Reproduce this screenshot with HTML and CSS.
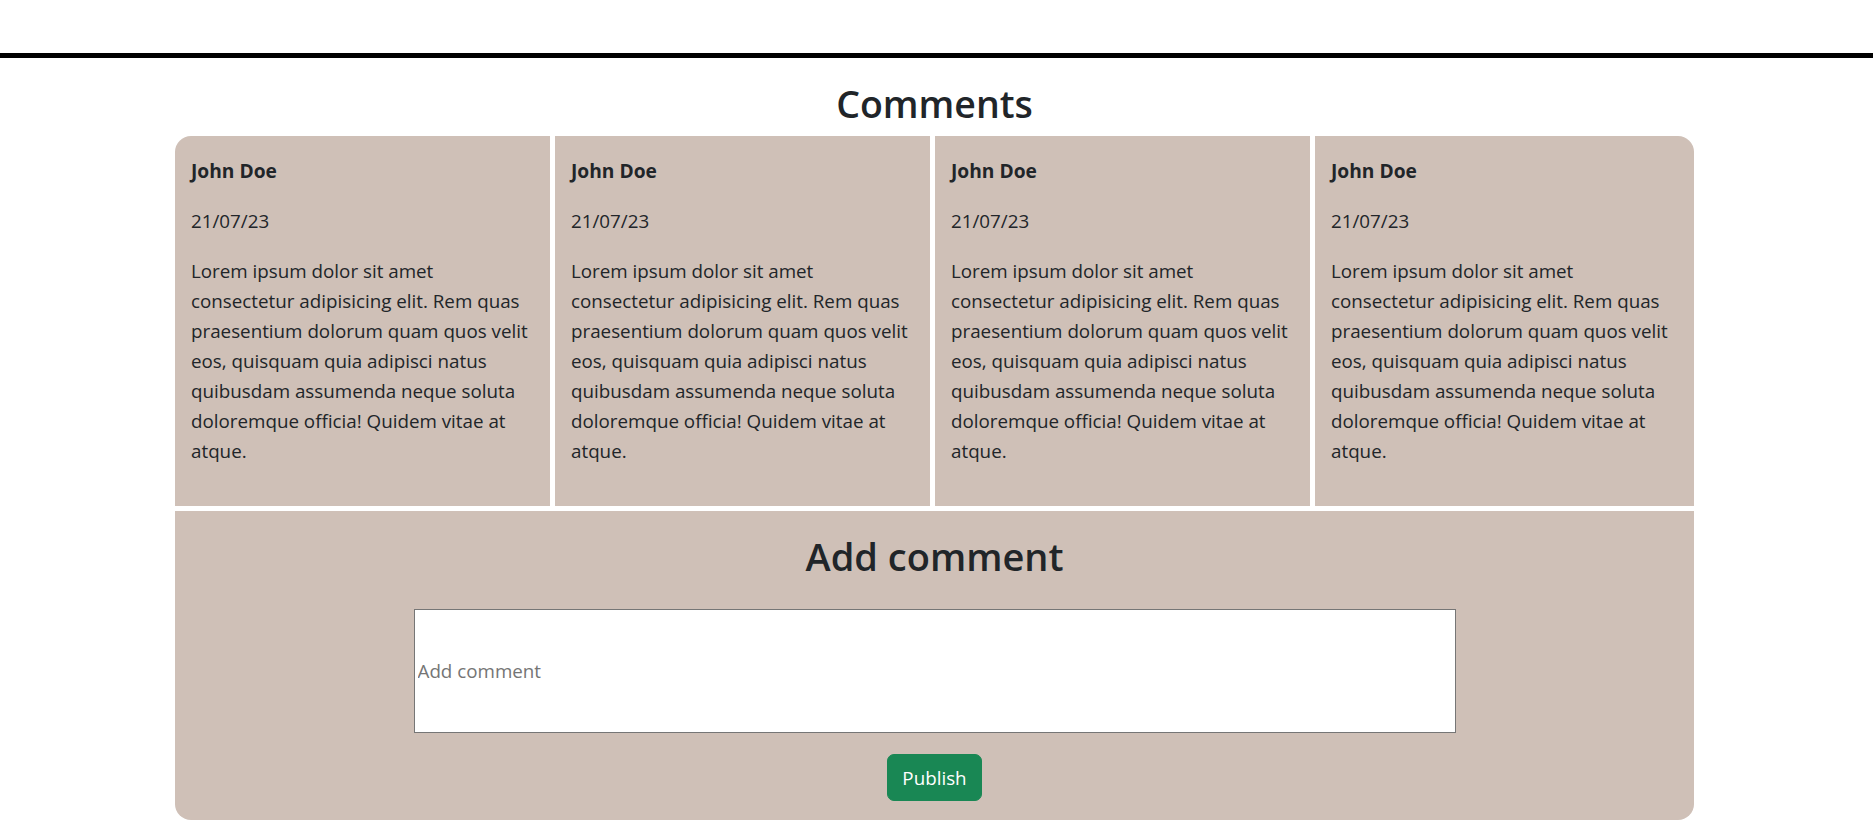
FILE: index.html
```html
<!DOCTYPE html>
<html lang="en">
<head>
<meta charset="utf-8">
<title>Comments</title>
<link rel="stylesheet" href="styles.css">
</head>
<body>
<header class="topbar"></header>
<main class="comments">
  <h2 class="section-title">Comments</h2>
  <div class="comment-grid">
    <article class="comment">
      <p class="author">John Doe</p>
      <p class="date">21/07/23</p>
      <p class="text">Lorem ipsum dolor sit amet consectetur adipisicing elit. Rem quas praesentium dolorum quam quos velit eos, quisquam quia adipisci natus quibusdam assumenda neque soluta doloremque officia! Quidem vitae at atque.</p>
    </article>
    <article class="comment">
      <p class="author">John Doe</p>
      <p class="date">21/07/23</p>
      <p class="text">Lorem ipsum dolor sit amet consectetur adipisicing elit. Rem quas praesentium dolorum quam quos velit eos, quisquam quia adipisci natus quibusdam assumenda neque soluta doloremque officia! Quidem vitae at atque.</p>
    </article>
    <article class="comment">
      <p class="author">John Doe</p>
      <p class="date">21/07/23</p>
      <p class="text">Lorem ipsum dolor sit amet consectetur adipisicing elit. Rem quas praesentium dolorum quam quos velit eos, quisquam quia adipisci natus quibusdam assumenda neque soluta doloremque officia! Quidem vitae at atque.</p>
    </article>
    <article class="comment">
      <p class="author">John Doe</p>
      <p class="date">21/07/23</p>
      <p class="text">Lorem ipsum dolor sit amet consectetur adipisicing elit. Rem quas praesentium dolorum quam quos velit eos, quisquam quia adipisci natus quibusdam assumenda neque soluta doloremque officia! Quidem vitae at atque.</p>
    </article>
  </div>
  <section class="add-comment">
    <h2 class="add-title">Add comment</h2>
    <form class="add-form">
      <input class="comment-input" type="text" placeholder="Add comment">
      <button class="publish-btn" type="button">Publish</button>
    </form>
  </section>
</main>
</body>
</html>
```

FILE: styles.css
```css
* {
  box-sizing: border-box;
}

html, body {
  margin: 0;
  padding: 0;
  background: #ffffff;
}

body {
  font-family: "Open Sans", "Noto Sans", sans-serif;
  font-size: 18.8px;
  line-height: 30px;
  color: #212529;
}

.topbar {
  height: 58px;
  border-bottom: 5px solid #000000;
}

.comments {
  width: 1519px;
  margin: 0 0 0 175px;
  padding-bottom: 10px;
}

.section-title {
  margin: 22px 0 8px;
  font-size: 37.5px;
  line-height: 48px;
  font-weight: 600;
  text-align: center;
  color: #212529;
}

.comment-grid {
  display: grid;
  grid-template-columns: 375px 375px 375px 1fr;
  gap: 5px;
}

.comment {
  background: #cfc0b7;
  padding: 20px 16px;
}

.comment:first-child {
  border-top-left-radius: 16px;
}

.comment:last-child {
  border-top-right-radius: 16px;
}

.comment p {
  margin: 0 0 20px;
}

.author {
  font-weight: 700;
  font-size: 19.2px;
}

.add-comment {
  margin-top: 5px;
  background: #cfc0b7;
  border-bottom-left-radius: 16px;
  border-bottom-right-radius: 16px;
  padding: 21px 0 19px;
  display: flex;
  flex-direction: column;
  align-items: center;
}

.add-title {
  margin: 0 0 29px;
  font-size: 38px;
  line-height: 48px;
  font-weight: 600;
  color: #212529;
}

.add-form {
  display: flex;
  flex-direction: column;
  align-items: center;
  gap: 21px;
}

.comment-input {
  width: 1042px;
  height: 124px;
  padding: 1px 3px;
  border: 1px solid #767676;
  background: #ffffff;
  font-family: inherit;
  font-size: 18.8px;
  color: #212529;
  outline: none;
}

.comment-input::placeholder {
  color: #757575;
}

.publish-btn {
  height: 47px;
  padding: 0 14px;
  border: 1px solid #198754;
  border-radius: 7px;
  background: #198754;
  color: #ffffff;
  font-family: inherit;
  font-size: 18.8px;
  line-height: 30px;
  cursor: pointer;
}
```
